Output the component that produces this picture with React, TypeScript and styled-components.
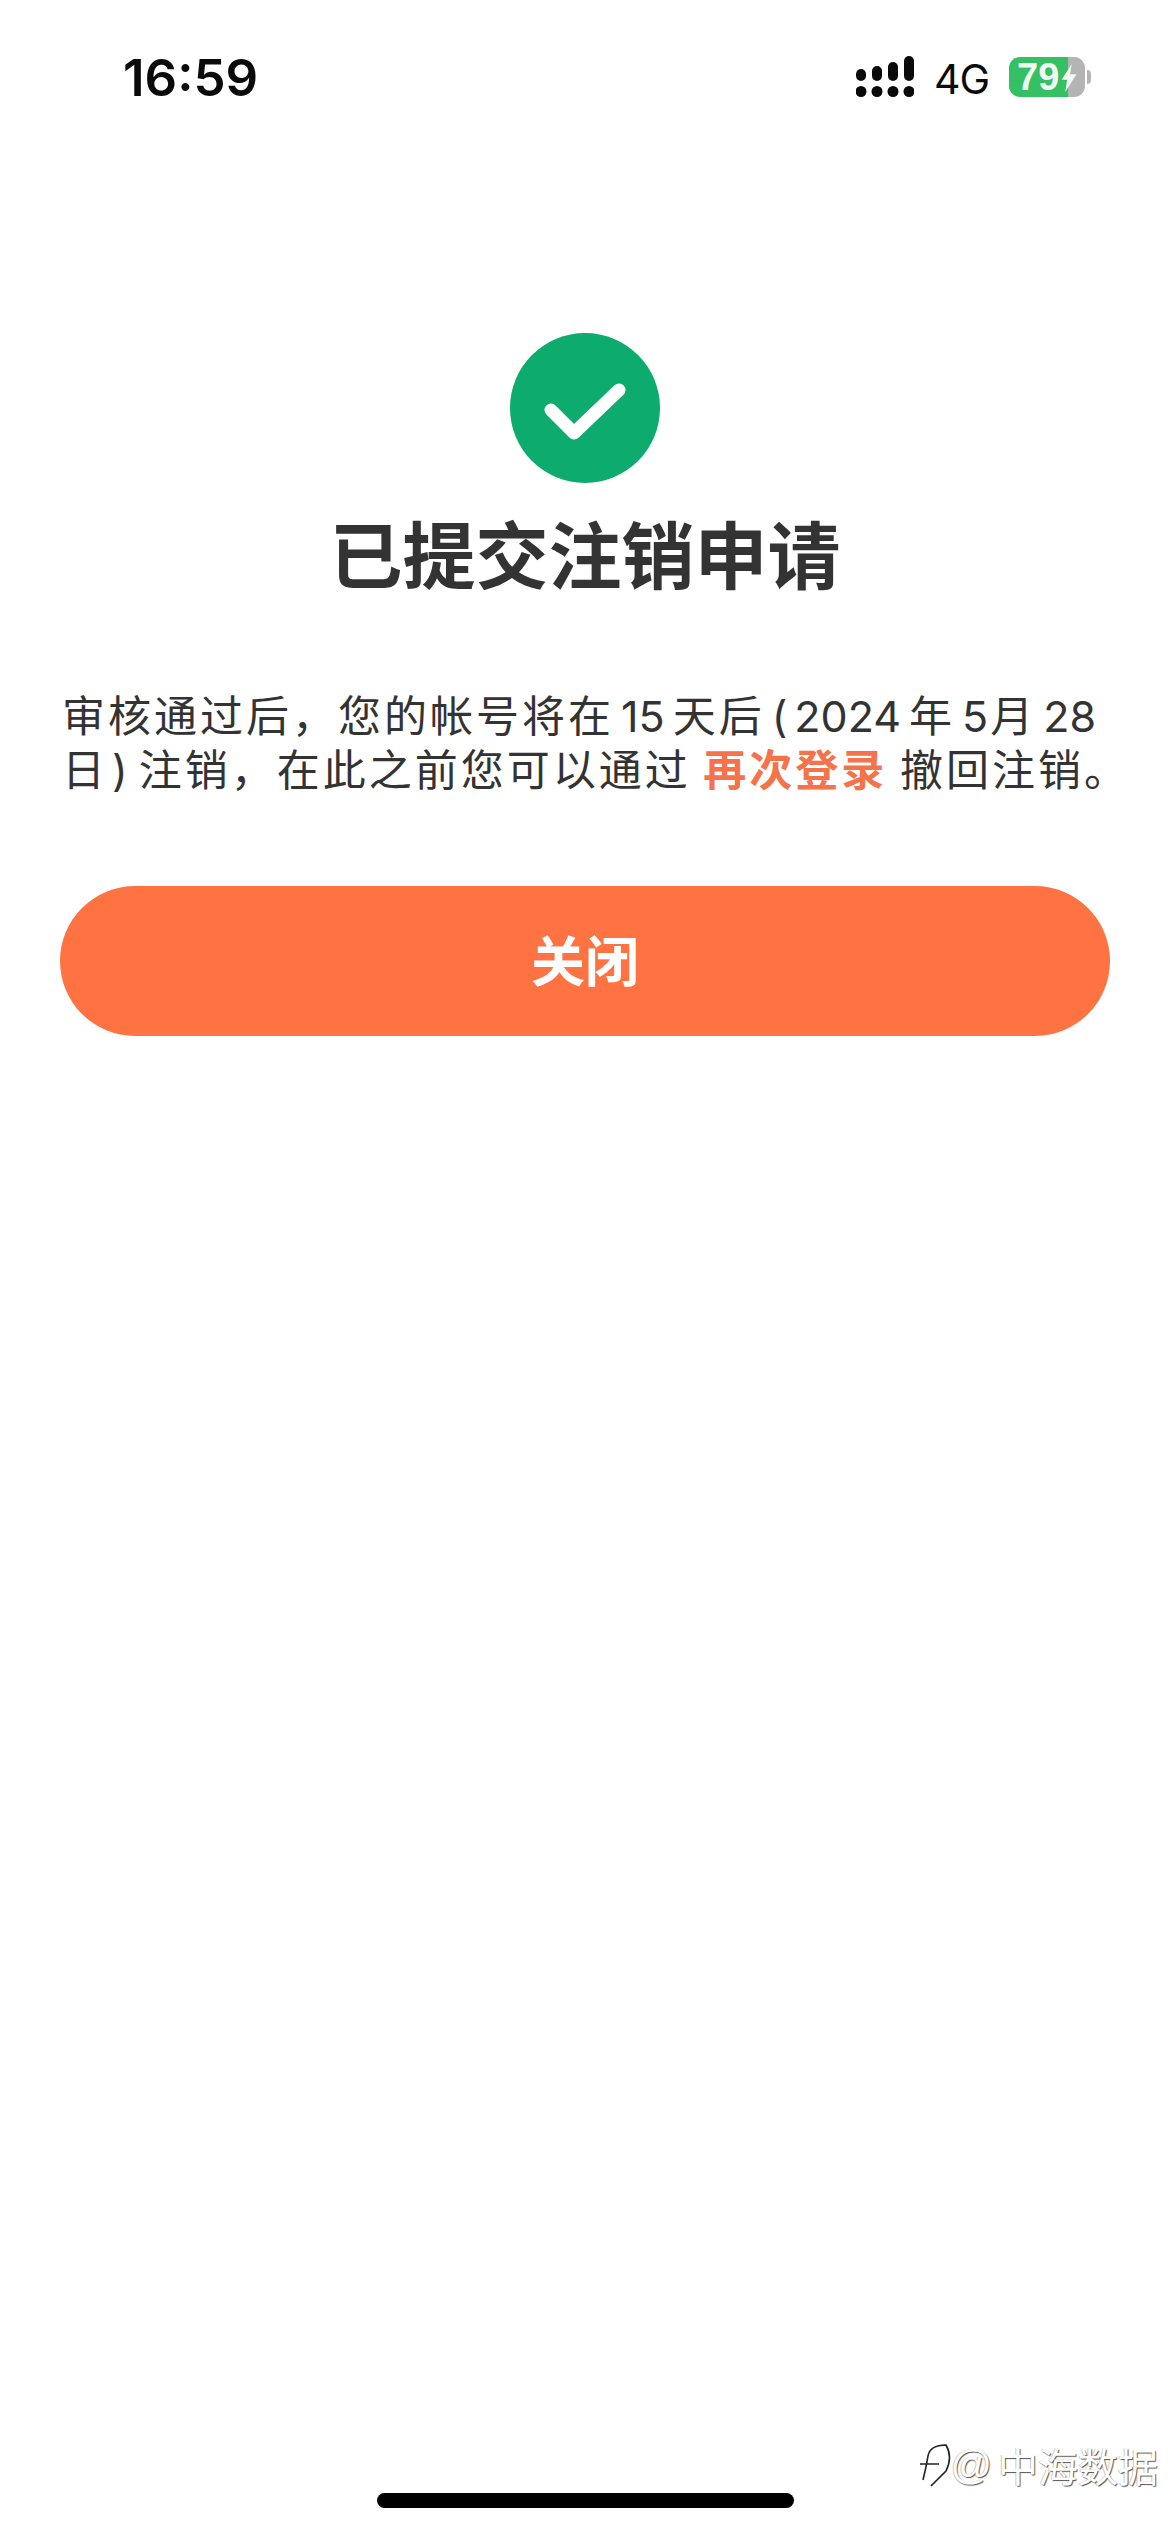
import React from 'react';
import styled, {createGlobalStyle} from 'styled-components';

const CJK = '"Noto Sans CJK SC", "Noto Sans", sans-serif';

const GlobalStyle = createGlobalStyle`
  html, body {
    margin: 0;
    padding: 0;
    background: #fff;
  }
`;

const Page = styled.div`
  position: relative;
  width: 1170px;
  height: 2532px;
  overflow: hidden;
  background: #fff;
  font-family: ${CJK};
`;

const StatusBar = styled.div`
  height: 156px;
  padding: 48px 85px 0 123px;
  box-sizing: border-box;
  display: flex;
  justify-content: space-between;
  align-items: flex-start;
`;

const Time = styled.div`
  font-family: Inter, sans-serif;
  font-size: 51px;
  font-weight: 600;
  line-height: 60px;
  color: #0a0a0a;
`;

const StatusIcons = styled.div`
  display: flex;
  align-items: center;
  gap: 20px;
  height: 58px;
`;

const NetworkLabel = styled.span`
  font-family: Inter, sans-serif;
  font-size: 41px;
  font-weight: 400;
  line-height: 46px;
  letter-spacing: -1px;
  margin-top: 3px;
  color: #0a0a0a;
`;

const Battery = styled.div`
  position: relative;
  width: 76px;
  height: 40px;
  border-radius: 11px;
  background: linear-gradient(to right, #34c063 0 78%, #b4b4b4 78% 100%);
  display: flex;
  align-items: center;
  padding-left: 8px;
  box-sizing: border-box;
  font-family: "Liberation Sans", Arial, sans-serif;
  font-size: 38px;
  font-weight: 700;
  color: #f2fbf2;
  line-height: 40px;

  &::after {
    content: '';
    position: absolute;
    right: -6px;
    top: 13px;
    width: 4px;
    height: 14px;
    border-radius: 0 4px 4px 0;
    background: #b4b4b4;
  }
`;

const Bolt = styled.svg`
  position: absolute;
  left: 51px;
  top: 7px;
`;

const Content = styled.main`
  padding: 177px 60px 0;
  display: flex;
  flex-direction: column;
  align-items: center;
`;

const SuccessIcon = styled.svg`
  display: block;
`;

const Title = styled.h1`
  margin: 20px 0 0;
  font-size: 73px;
  font-weight: 700;
  line-height: 96px;
  color: #333;
  white-space: nowrap;
`;

const Notice = styled.p`
  align-self: stretch;
  margin: 87px 0 0;
  padding-left: 2px;
  font-size: 43px;
  line-height: 54px;
  letter-spacing: 3px;
  color: #333;
  white-space: nowrap;
`;

const Num = styled.span<{$tight?: boolean}>`
  font-family: Inter, sans-serif;
  line-height: 1;
  letter-spacing: 0;
  margin: 0 ${p => (p.$tight ? 2 : 8)}px 0 7px;
`;

const Paren = styled.span<{$left: number; $right: number}>`
  font-family: Inter, sans-serif;
  line-height: 1;
  letter-spacing: 0;
  margin: 0 ${p => p.$right}px 0 ${p => p.$left}px;
`;

const NoticeLink = styled.b`
  font-weight: 700;
  color: #f5734a;
`;

const CloseButton = styled.button`
  align-self: stretch;
  height: 150px;
  margin-top: 92px;
  padding: 0 0 5px;
  border: 0;
  border-radius: 75px;
  background: #ff7342;
  color: #fff;
  font-family: ${CJK};
  font-size: 54px;
  font-weight: 700;
`;

const Watermark = styled.div`
  position: absolute;
  right: 12px;
  bottom: 43px;
  display: flex;
  align-items: center;
  gap: 6px;
  font-size: 40px;
  line-height: 48px;
  color: #fff;
  text-shadow: 1px 1px 1px #555, -1px 0 0 #ccc;
`;

const AtSign = styled.span`
  font-family: "Liberation Sans", Arial, sans-serif;
  font-size: 41px;
  margin-left: -9px;
`;

const HomeIndicator = styled.div`
  position: absolute;
  left: 377px;
  bottom: 24px;
  width: 417px;
  height: 15px;
  border-radius: 8px;
  background: #000;
`;

const SignalIcon = () => (
  <svg width="58" height="42" viewBox="0 0 58 42" fill="#0a0a0a">
    <rect x="0" y="13" width="10" height="12" rx="5" />
    <rect x="16" y="10" width="10" height="15" rx="5" />
    <rect x="32" y="6" width="10" height="19" rx="5" />
    <rect x="48" y="0" width="10" height="25" rx="5" />
    <circle cx="5" cy="35.5" r="5.5" />
    <circle cx="21" cy="35.5" r="5.5" />
    <circle cx="37" cy="35.5" r="5.5" />
    <circle cx="53" cy="35.5" r="5.5" />
  </svg>
);

const App: React.FC = () => {
  return (
    <Page>
      <GlobalStyle />
      <StatusBar>
        <Time>16:59</Time>
        <StatusIcons>
          <SignalIcon />
          <NetworkLabel>4G</NetworkLabel>
          <Battery>
            79
            <Bolt width="18" height="28" viewBox="0 0 18 30" fill="#f2fbf2">
              <path d="M12 0 1 17h6L5 30 17 11h-7z" />
            </Bolt>
          </Battery>
        </StatusIcons>
      </StatusBar>
      <Content>
        <SuccessIcon width="150" height="150" viewBox="0 0 150 150">
          <circle cx="75" cy="75" r="75" fill="#0dac6e" />
          <path
            d="M41 77 64 100 109 57"
            fill="none"
            stroke="#fff"
            strokeWidth="13"
            strokeLinecap="round"
            strokeLinejoin="round"
          />
        </SuccessIcon>
        <Title>已提交注销申请</Title>
        <Notice>
          审核通过后，您的帐号将在<Num>15</Num>天后<Paren $left={7} $right={0}>(</Paren><Num>2024</Num>年<Num $tight>5</Num>月<Num>28</Num>
          <br />
          日<Paren $left={4} $right={11}>)</Paren>注销，在此之前您可以通过 <NoticeLink>再次登录</NoticeLink> 撤回注销。
        </Notice>
        <CloseButton>关闭</CloseButton>
      </Content>
      <Watermark>
        <svg width="34" height="46" viewBox="0 0 34 46" fill="none" stroke="#222" strokeWidth="1.6">
          <path d="M1 22H20M4 38Q7 26 9 14Q11 3 27 3Q34 15 27 29Q20 36 12 44" />
        </svg>
        <AtSign>@</AtSign>
        中海数据
      </Watermark>
      <HomeIndicator />
    </Page>
  );
};

export default App;
